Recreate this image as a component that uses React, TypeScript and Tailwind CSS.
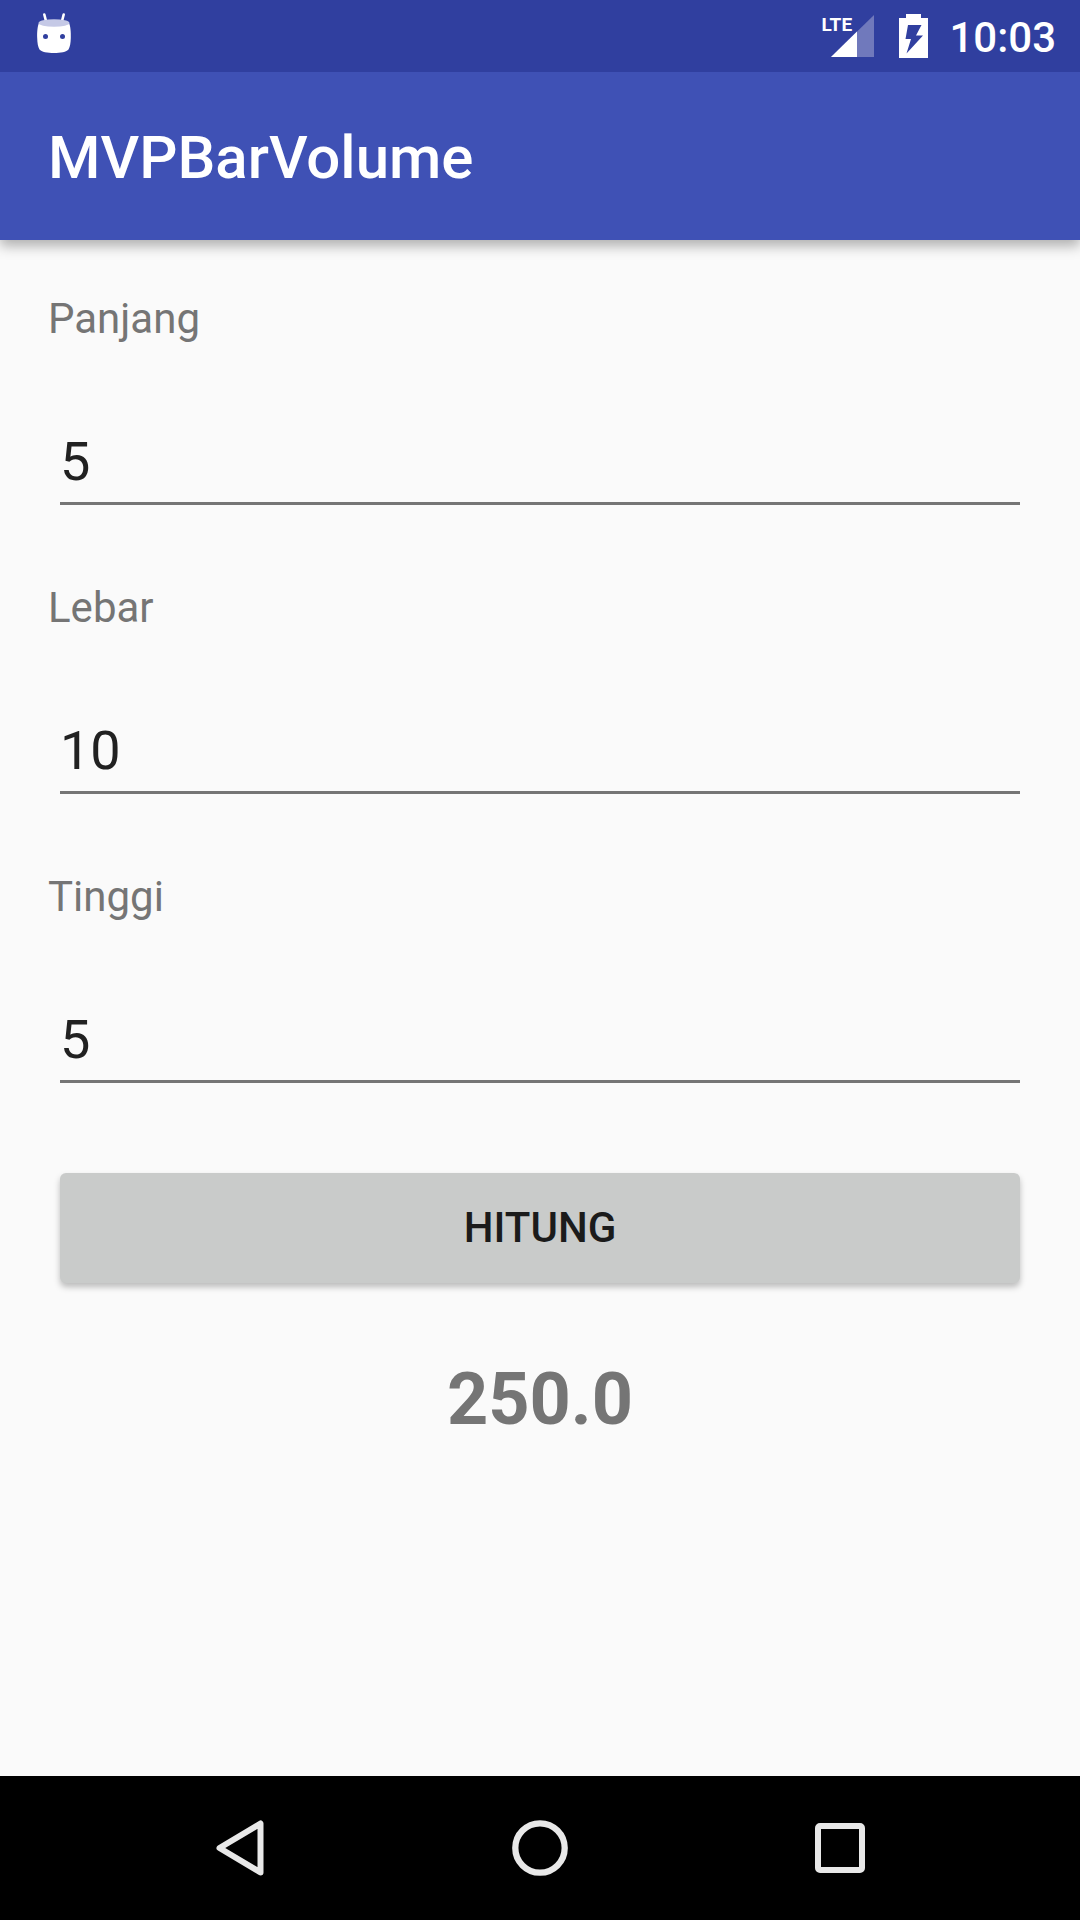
import { useState } from "react";

function RobotIcon() {
  return (
    <svg viewBox="0 0 36 44" className="h-11 w-9" aria-hidden="true">
      <path d="M8.300 2.500 10.500 11M27.700 2.500 25.500 11" stroke="#fff" strokeWidth="2.600" strokeLinecap="round" />
      <path
        d="M3 11C1.500 14 1 20 1.200 26C1.300 31 2 35 3.500 37.500C7 42.300 29 42.300 32.500 37.500C34 35 34.700 31 34.800 26C35 20 34.500 14 33 11Z"
        fill="#fff"
      />
      <ellipse cx="18" cy="11" rx="15.500" ry="3.800" fill="#c5c9e6" />
      <circle cx="9.500" cy="24.500" r="2.500" fill="#303f9f" />
      <circle cx="26.500" cy="24.500" r="2.500" fill="#303f9f" />
    </svg>
  );
}

function SignalIcon() {
  return (
    <div className="relative flex h-[42px] w-[53px] justify-end">
      <svg viewBox="0 0 43 42" className="h-[42px] w-[43px]" aria-hidden="true">
        <path d="M0 42 43 0V42Z" fill="#7079bc" />
        <path d="M0 42 26 16.600V42Z" fill="#fff" />
      </svg>
      <span className="absolute top-0 left-0 text-[19px] leading-5 font-bold">LTE</span>
    </div>
  );
}

function BatteryIcon() {
  return (
    <svg viewBox="0 0 29 44" className="h-11 w-[29px]" aria-hidden="true">
      <path d="M7 0H22V4H29V44H0V4H7Z" fill="#fff" />
      <path d="M9 11H22.500L17 21.500H24L7.500 39.500L12 25H6.500Z" fill="#303f9f" />
    </svg>
  );
}

type FieldProps = {
  id: string;
  label: string;
  value: string;
  onChange: (value: string) => void;
};

function Field({ id, label, value, onChange }: FieldProps) {
  return (
    <div className="flex flex-col">
      <label htmlFor={id} className="text-[42px] leading-[56px] text-[#757575]">
        {label}
      </label>
      <input
        id={id}
        type="text"
        inputMode="decimal"
        value={value}
        onChange={(e) => onChange(e.target.value)}
        className="mx-3 mt-[82px] h-[76px] border-b-[3px] border-[#757575] bg-transparent pb-[9px] text-[54px] leading-[64px] text-[#212121] outline-none"
      />
    </div>
  );
}

export default function App() {
  const [length, setLength] = useState("5");
  const [width, setWidth] = useState("10");
  const [height, setHeight] = useState("5");
  const [result, setResult] = useState("250.0");

  const calculate = () => {
    const volume = Number(length) * Number(width) * Number(height);
    setResult(Number.isInteger(volume) ? volume.toFixed(1) : String(volume));
  };

  return (
    <div className="flex min-h-screen flex-col bg-[#fafafa] font-['Roboto',sans-serif]">
      <div className="z-10 flex h-[72px] items-center justify-between bg-[#303f9f] pr-6 pl-9 text-white">
        <div className="pb-1">
          <RobotIcon />
        </div>
        <div className="flex items-center">
          <SignalIcon />
          <div className="ml-[25px]">
            <BatteryIcon />
          </div>
          <span className="ml-[21px] pt-1 text-[42px] leading-[56px] font-medium">10:03</span>
        </div>
      </div>

      <header className="flex h-[168px] items-center bg-[#3f51b5] px-12 text-white shadow-[0_6px_12px_rgba(0,0,0,0.3)]">
        <h1 className="pt-1 text-[60px] leading-[72px] font-medium">MVPBarVolume</h1>
      </header>

      <main className="flex grow flex-col px-12 pt-[51px] pb-12">
        <div className="flex flex-col gap-[75px]">
          <Field id="panjang" label="Panjang" value={length} onChange={setLength} />
          <Field id="lebar" label="Lebar" value={width} onChange={setWidth} />
          <Field id="tinggi" label="Tinggi" value={height} onChange={setHeight} />
        </div>
        <button
          type="button"
          onClick={calculate}
          className="mx-3 mt-[90px] h-[110px] rounded-md bg-[#c9cbca] text-[42px] leading-[56px] font-medium text-[#1b1b1b] shadow-[0_4px_6px_rgba(0,0,0,0.25)]"
        >
          HITUNG
        </button>
        <output className="mt-[75px] text-center text-[72px] leading-[84px] font-bold text-[#757575]">
          {result}
        </output>
      </main>

      <nav className="grid h-36 grid-cols-3 bg-black px-[90px]">
        <button type="button" aria-label="Back" className="flex items-center justify-center">
          <svg viewBox="0 0 48 56" className="h-14 w-12" fill="none" aria-hidden="true">
            <path d="M3.500 28 44.500 3.500V52.500Z" stroke="#e8e8e8" strokeWidth="6" strokeLinejoin="round" />
          </svg>
        </button>
        <button type="button" aria-label="Home" className="flex items-center justify-center">
          <svg viewBox="0 0 56 56" className="size-14" fill="none" aria-hidden="true">
            <circle cx="28" cy="28" r="24.700" stroke="#e8e8e8" strokeWidth="6.300" />
          </svg>
        </button>
        <button type="button" aria-label="Recent apps" className="flex items-center justify-center">
          <svg viewBox="0 0 50 50" className="size-[50px]" fill="none" aria-hidden="true">
            <rect x="3" y="3" width="44" height="44" rx="2" stroke="#e8e8e8" strokeWidth="6" />
          </svg>
        </button>
      </nav>
    </div>
  );
}
